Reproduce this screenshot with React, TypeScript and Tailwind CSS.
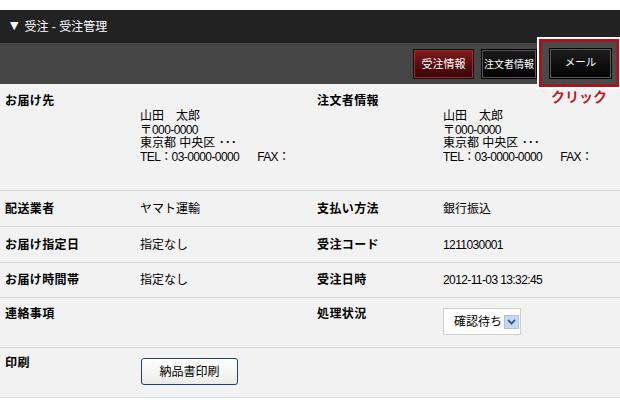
import React from "react";

const L = ({ children }: { children: React.ReactNode }) => (
  <span className="text-[12px] tracking-[-0.6px]">{children}</span>
);

const Label = ({ children }: { children: React.ReactNode }) => (
  <div className="font-bold text-[12px] leading-[16px] tracking-[0.4px] text-black">{children}</div>
);

const Address = () => (
  <div className="text-[12px] leading-[13.5px] text-black">
    <div>山田　太郎</div>
    <div>〒<L>000-0000</L></div>
    <div>東京都 中央区 ･･･</div>
    <div>
      <L>TEL：03-0000-0000</L>
      <span className="inline-block w-[18px]" />
      <L>FAX：</L>
    </div>
  </div>
);

export default function App() {
  return (
    <div
      className="w-[620px] h-[418px] bg-white pt-[10px] overflow-hidden"
      style={{ fontFamily: '"Liberation Sans", "Noto Sans CJK JP", sans-serif' }}
    >
      {/* header */}
      <div className="h-[33px] bg-[#222222] flex items-center pl-[10px] text-white text-[12px]">
        <span className="text-[11px] mr-[6px]" style={{ fontFamily: '"DejaVu Sans", sans-serif' }}>▼</span>
        <span>受注 - 受注管理</span>
      </div>

      {/* toolbar */}
      <div className="h-[41px] bg-[#454545] flex items-start justify-end pr-[1px]">
        <div className="mt-[6px] mr-[7px] w-[61px] h-[30px] border border-[#111] bg-[#111]">
          <div className="w-full h-full border border-[#9a2a2c] bg-gradient-to-b from-[#7d1a1d] to-[#3a0506] flex items-center justify-center text-white text-[11px]">
            受注情報
          </div>
        </div>
        <div className="mt-[6px] mr-[2px] w-[56px] h-[30px] border border-[#000]">
          <div className="w-full h-full border border-[#555] bg-gradient-to-b from-[#1a1a1a] to-[#050505] flex items-center justify-center text-white text-[10px]">
            注文者情報
          </div>
        </div>
        <div className="relative z-10 mt-[-4px] w-[80px] h-[48px] border-[3px] border-[#a3161b] bg-[#4a4a4a] shadow-[0_0_0_2px_#ffffff] flex items-center justify-center">
          <div className="ml-[3px] w-[63px] h-[31px] border border-[#000]">
            <div className="w-full h-full border border-[#5a5a5a] bg-gradient-to-b from-[#1c1c1c] to-[#060606] flex items-center justify-center text-white text-[10.5px]">
              メール
            </div>
          </div>
          <div className="absolute left-1/2 -translate-x-1/2 top-[45px] whitespace-nowrap font-bold text-[14px] text-[#b81f25] [text-shadow:0_0_2px_#fff,0_0_2px_#fff,0_0_1px_#fff]">
            クリック
          </div>
        </div>
      </div>

      {/* content */}
      <div className="bg-[#f2f2f2]">
        {/* row 1 */}
        <div className="grid grid-cols-[140px_177px_126px_1fr] h-[107px] border-b border-[#d9d9d9]">
          <div className="pl-[5px] pt-[9px]"><Label>お届け先</Label></div>
          <div className="pt-[26px]"><Address /></div>
          <div className="pt-[9px]"><Label>注文者情報</Label></div>
          <div className="pt-[26px]"><Address /></div>
        </div>
        {/* row 2 */}
        <div className="grid grid-cols-[140px_177px_126px_1fr] h-[36px] items-center border-b border-[#d9d9d9] text-[12px]">
          <div className="pl-[5px]"><Label>配送業者</Label></div>
          <div>ヤマト運輸</div>
          <div><Label>支払い方法</Label></div>
          <div>銀行振込</div>
        </div>
        {/* row 3 */}
        <div className="grid grid-cols-[140px_177px_126px_1fr] h-[36px] items-center border-b border-[#d9d9d9] text-[12px]">
          <div className="pl-[5px]"><Label>お届け指定日</Label></div>
          <div>指定なし</div>
          <div><Label>受注コード</Label></div>
          <div><L>1211030001</L></div>
        </div>
        {/* row 4 */}
        <div className="grid grid-cols-[140px_177px_126px_1fr] h-[35px] items-center border-b border-[#d9d9d9] text-[12px]">
          <div className="pl-[5px]"><Label>お届け時間帯</Label></div>
          <div>指定なし</div>
          <div><Label>受注日時</Label></div>
          <div><L>2012-11-03 13:32:45</L></div>
        </div>
        {/* row 5 */}
        <div className="grid grid-cols-[140px_177px_126px_1fr] h-[50px] border-b border-[#d9d9d9] text-[12px]">
          <div className="pl-[5px] pt-[8px]"><Label>連絡事項</Label></div>
          <div />
          <div className="pt-[8px]"><Label>処理状況</Label></div>
          <div className="pt-[10px]">
            <div className="w-[78px] h-[27px] bg-white border border-[#d0d0d0] flex items-center pl-[10px] gap-[2px]">
              <span className="text-[12px] text-black">確認待ち</span>
              <span className="w-[15px] h-[14px] bg-[#c6d8f6] border border-[#a9c1ea] flex items-center justify-center">
                <svg width="9" height="6" viewBox="0 0 9 6">
                  <path d="M1 1 L4.5 4.5 L8 1" stroke="#4b5f86" strokeWidth="2" fill="none" />
                </svg>
              </span>
            </div>
          </div>
        </div>
        {/* row 6 */}
        <div className="grid grid-cols-[140px_177px_126px_1fr] h-[50px] border-b border-[#d9d9d9] text-[12px]">
          <div className="pl-[5px] pt-[7px]"><Label>印刷</Label></div>
          <div className="pt-[10px] pl-[1px]">
            <button className="w-[97px] h-[27px] rounded-[3px] border border-[#1d3f6c] bg-gradient-to-b from-[#ffffff] to-[#ebebe6] text-[12px] text-black flex items-center justify-center">
              納品書印刷
            </button>
          </div>
          <div />
          <div />
        </div>
      </div>
    </div>
  );
}
